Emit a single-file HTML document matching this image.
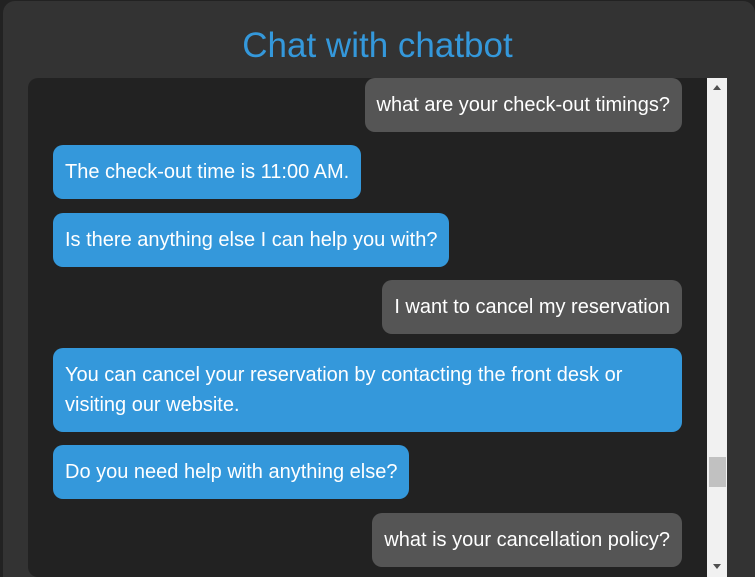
<!DOCTYPE html>
<html><head><style>
html,body{margin:0;padding:0;background:#222;width:755px;height:577px;overflow:hidden;font-family:"Liberation Sans",Arial,sans-serif;position:relative}
.panel{position:absolute;left:3px;top:1px;width:752px;height:576px;background:#333;border-radius:12px 12px 0 0}
h1{position:absolute;left:0;width:755px;top:26px;margin:0;text-align:center;font-weight:normal;font-size:35px;color:#3498db;line-height:40px}
.chat{position:absolute;left:28px;top:78px;width:679px;height:499px;background:#222;border-radius:10px 0 0 10px}
.sb{position:absolute;left:707px;top:78px;width:20px;height:499px;background:#f1f1f1}
.thumb{position:absolute;left:709px;top:457px;width:17px;height:30px;background:#c1c1c1}
.b{position:absolute;padding:12px;font-size:20px;line-height:30px;color:#fff;border-radius:10px;box-sizing:border-box;white-space:nowrap}
.u{background:#555;right:73px}
.o{background:#3498db;left:53px}
.arr{position:absolute;left:713px;width:0;height:0;border-left:4px solid transparent;border-right:4px solid transparent}
</style></head><body>
<div class="panel"></div>
<h1>Chat with chatbot</h1>
<div class="chat"></div>
<div class="b u" style="top:78px;height:54px">what are your check-out timings?</div>
<div class="b o" style="top:145px;height:54px">The check-out time is 11:00 AM.</div>
<div class="b o" style="top:213px;height:54px">Is there anything else I can help you with?</div>
<div class="b u" style="top:280px;height:54px">I want to cancel my reservation</div>
<div class="b o" style="top:348px;height:84px;width:629px;white-space:normal">You can cancel your reservation by contacting the front desk or<br>visiting our website.</div>
<div class="b o" style="top:445px;height:54px">Do you need help with anything else?</div>
<div class="b u" style="top:513px;height:54px">what is your cancellation policy?</div>
<div class="sb"></div>
<div class="thumb"></div>
<div class="arr" style="top:85px;border-bottom:5px solid #505050"></div>
<div class="arr" style="top:564px;border-top:5px solid #505050"></div>
</body></html>
